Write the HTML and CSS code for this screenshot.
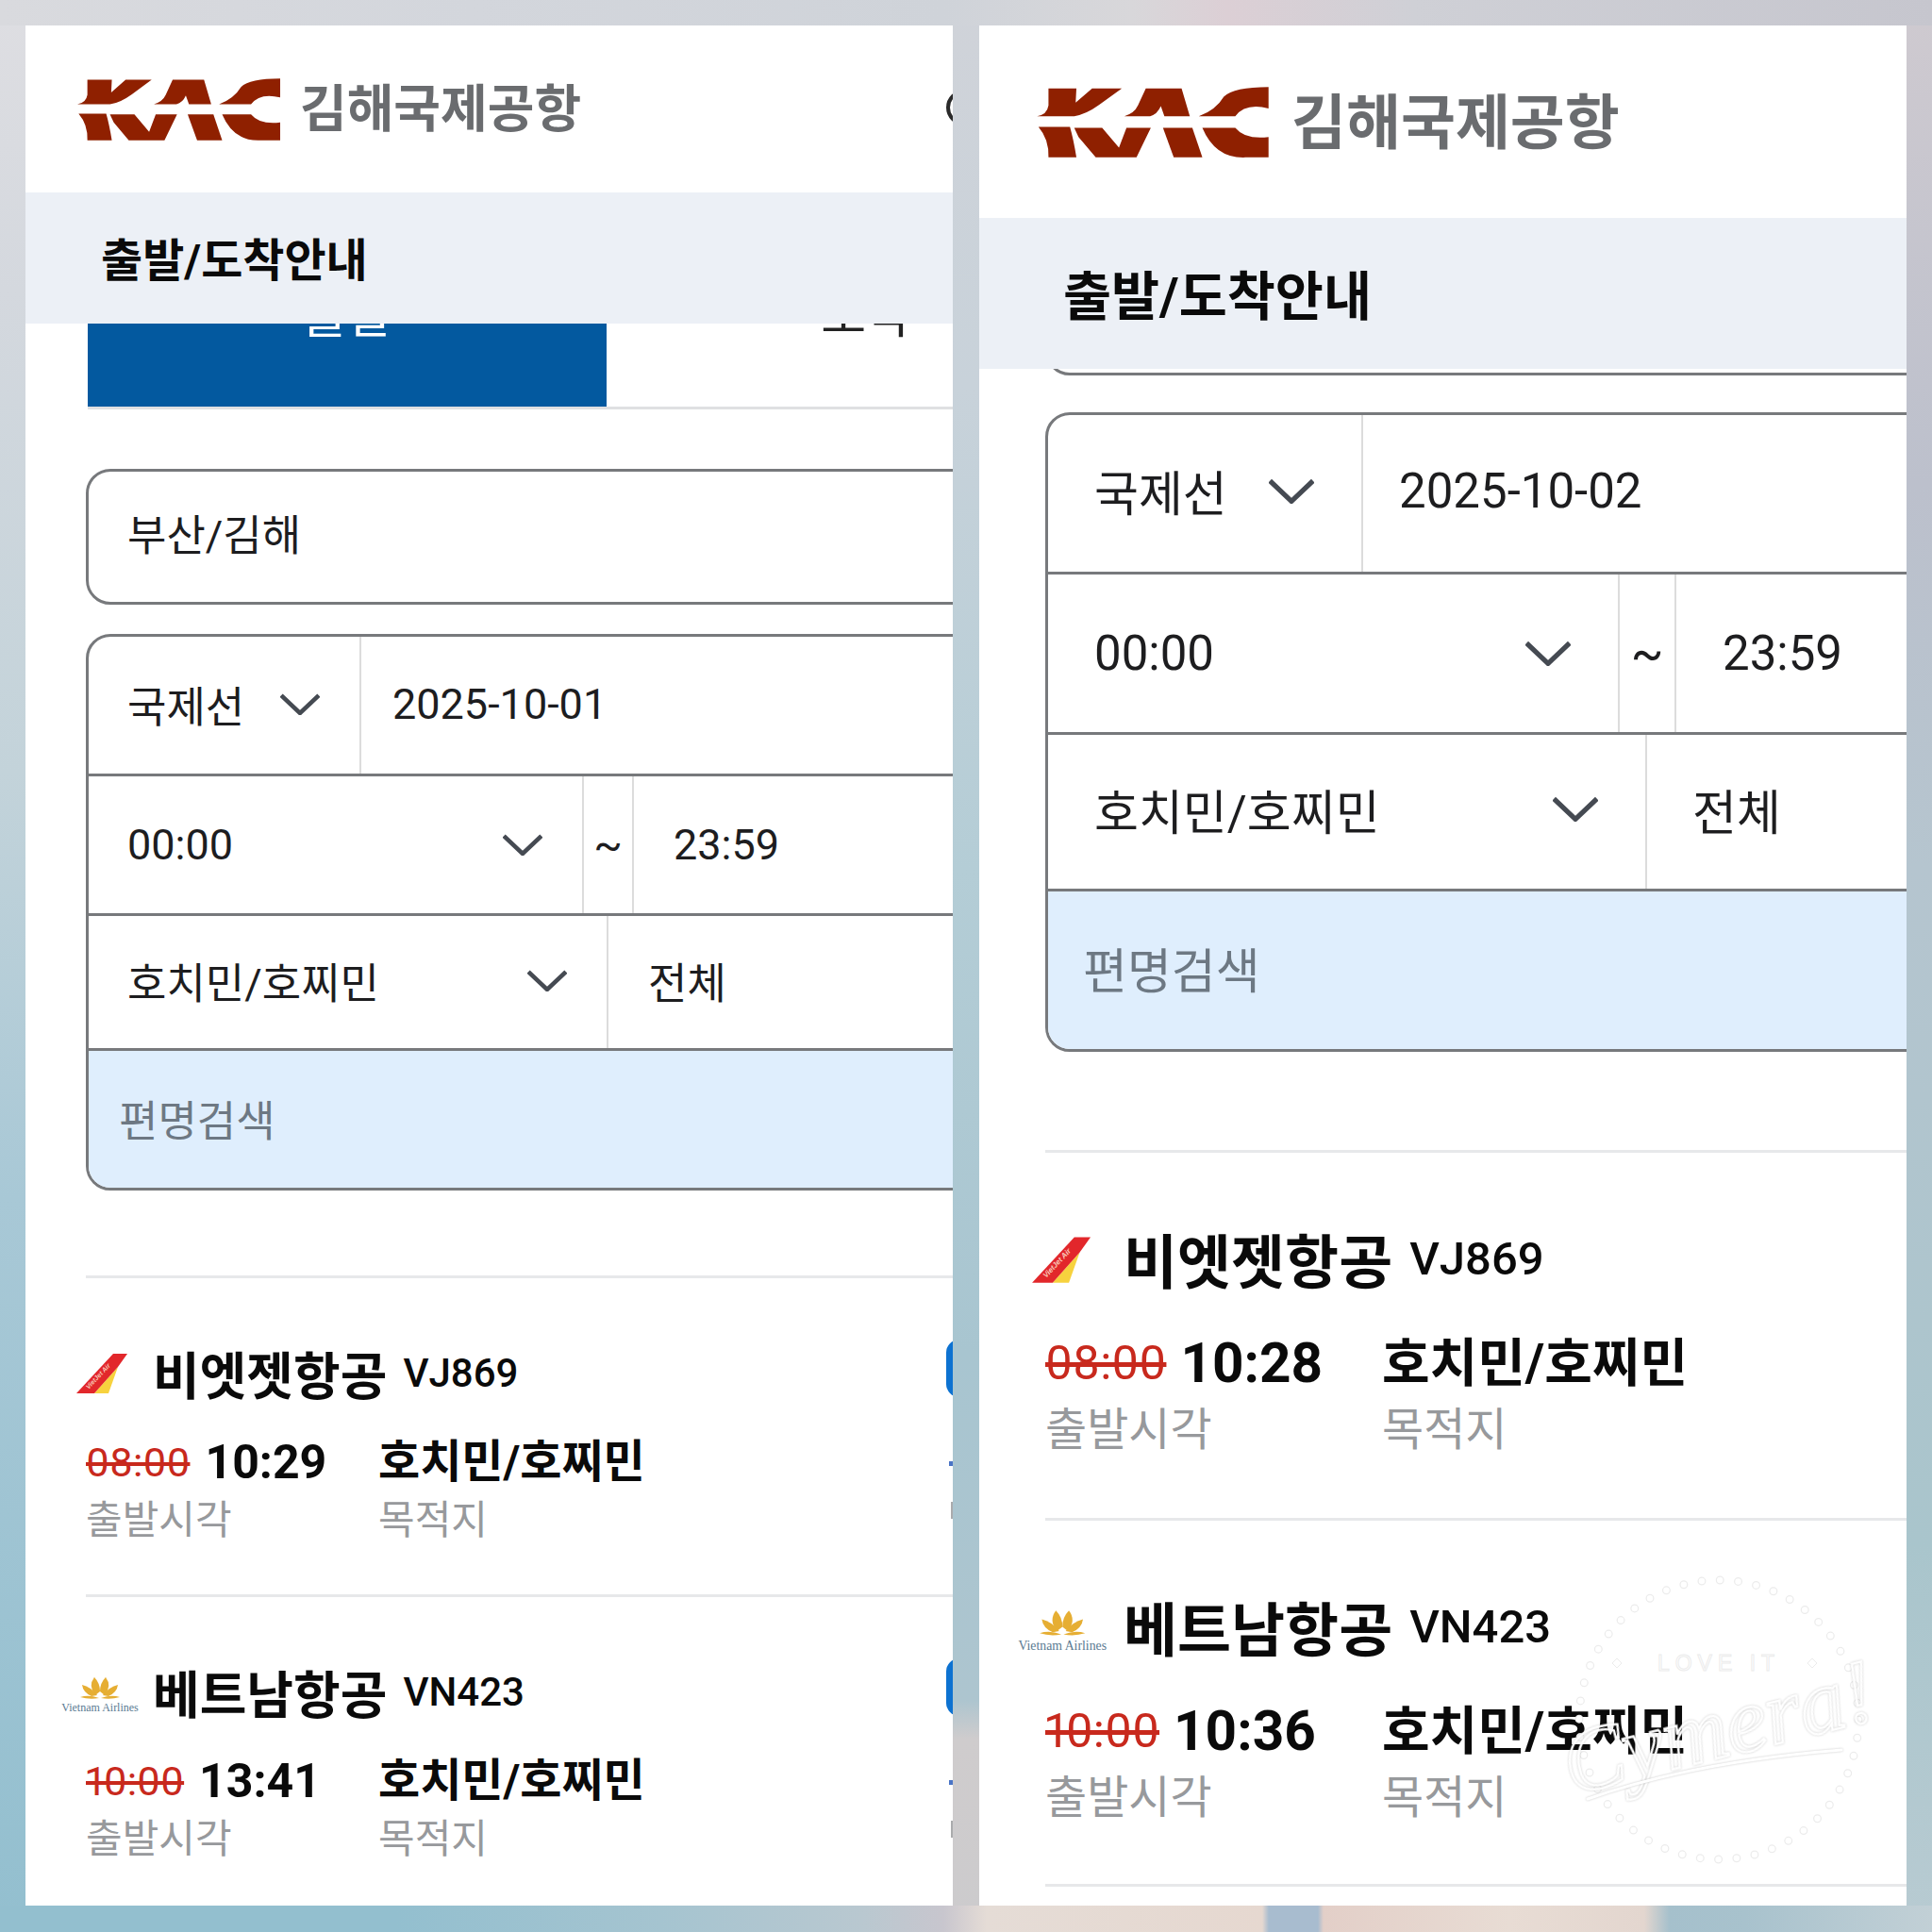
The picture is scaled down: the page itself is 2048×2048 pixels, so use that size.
FILE: index.html
```html
<!DOCTYPE html>
<html lang="ko">
<head>
<meta charset="utf-8">
<title>김해국제공항 출발/도착안내</title>
<link rel="stylesheet" href="styles.css">
</head>
<body>
<svg class="defs" width="0" height="0">
  <defs>
    <g id="kac">
      <path d="M100 72H178L176 112L222 72H305L242 118Q205 145 172 150H68Q96 146 100 120Z"/>
      <path d="M72 180H160Q170 215 178 265H100Q102 215 72 180Z"/>
      <path d="M172 182H250L297 238L318 182H386L346 265H232L184 208Z"/>
      <path d="M312 150Q340 142 350 120L372 72H472L495 150H424L414 122Q404 145 384 150Z"/>
      <path d="M420 182H502L530 265H450Z"/>
      <path d="M520 150Q568 132 590 95Q618 68 715 68V128Q650 112 622 150Z"/>
      <path d="M530 182H622Q650 216 715 208V265H650Q566 268 530 182Z"/>
    </g>
    <g id="tail">
      <polygon points="19,42 44,14 34,42" fill="#f7d23e"/>
      <polygon points="0,42 39,0 54,0 44,14 19,42" fill="#e2272b"/>
      <text class="tail-text" x="0" y="0" transform="translate(13 38) rotate(-47)">VietJet Air</text>
    </g>
    <g id="lotus" fill="#e6ae33">
      <path d="M37 34Q29 24 36 15Q42 21 42 30Z"/>
      <path d="M47 34Q55 24 48 15Q42 21 42 30Z"/>
      <path d="M33 35Q24 31 23 23Q32 25 39 34Z"/>
      <path d="M51 35Q60 31 61 23Q52 25 45 34Z"/>
      <path d="M21 36Q30 33 41 37Q31 39 21 36Z"/>
      <path d="M63 36Q54 33 43 37Q53 39 63 36Z"/>
      <text class="vn-text" x="42" y="51" text-anchor="middle">Vietnam Airlines</text>
    </g>
    <polyline id="chev" points="1,2 20,20 39,2" fill="none" stroke="#454a52" stroke-width="4.4"/>
  </defs>
</svg>
<main class="collage">

  <section class="panel panel-a">
    <header class="head">
      <svg class="kac" viewBox="68 65 647 203" fill="#8f2000"><use href="#kac"/></svg>
      <span class="airport">김해국제공항</span>
      <span class="search-ring"></span>
    </header>
    <h1 class="sub">출발/도착안내</h1>
    <div class="content">
      <div class="tabs">
        <div class="tab tab-on">출발</div>
        <div class="tab">도착</div>
      </div>
      <div class="airport-input">부산/김해</div>
      <div class="form">
        <div class="row row-1">
          <div class="cell first">국제선<svg class="chev" viewBox="0 0 40 22"><use href="#chev"/></svg></div>
          <div class="cell second">2025-10-01</div>
        </div>
        <div class="row row-2">
          <div class="cell first">00:00<svg class="chev" viewBox="0 0 40 22"><use href="#chev"/></svg></div>
          <div class="cell tilde">~</div>
          <div class="cell third">23:59</div>
        </div>
        <div class="row row-3">
          <div class="cell first">호치민/호찌민<svg class="chev" viewBox="0 0 40 22"><use href="#chev"/></svg></div>
          <div class="cell second">전체</div>
        </div>
        <div class="row row-4">편명검색</div>
      </div>
      <div class="flights">
        <article class="flight">
          <div class="flight-main">
            <div class="flight-head"><svg class="logo" viewBox="0 0 88 60"><use href="#tail" x="17" y="10"/></svg><span class="name">비엣젯항공</span><span class="code">VJ869</span></div>
            <div class="flight-info">
              <div class="col-time"><div class="times"><s>08:00</s><b>10:29</b></div><div class="label">출발시각</div></div>
              <div><div class="dest">호치민/호찌민</div><div class="label">목적지</div></div>
            </div>
          </div>
          <div class="actions"><span class="pill"></span><span class="dot"></span><span class="bar"></span></div>
        </article>
        <article class="flight">
          <div class="flight-main">
            <div class="flight-head"><svg class="logo" viewBox="0 0 88 60"><use href="#lotus"/></svg><span class="name">베트남항공</span><span class="code">VN423</span></div>
            <div class="flight-info">
              <div class="col-time"><div class="times"><s>10:00</s><b>13:41</b></div><div class="label">출발시각</div></div>
              <div><div class="dest">호치민/호찌민</div><div class="label">목적지</div></div>
            </div>
          </div>
          <div class="actions"><span class="pill"></span><span class="dot"></span><span class="bar"></span></div>
        </article>
      </div>
    </div>
  </section>

  <section class="panel panel-b">
    <header class="head">
      <svg class="kac" viewBox="68 65 647 203" fill="#8f2000"><use href="#kac"/></svg>
      <span class="airport">김해국제공항</span>
    </header>
    <h1 class="sub">출발/도착안내</h1>
    <div class="content">
      <div class="airport-input"></div>
      <div class="form">
        <div class="row row-1">
          <div class="cell first">국제선<svg class="chev" viewBox="0 0 40 22"><use href="#chev"/></svg></div>
          <div class="cell second">2025-10-02</div>
        </div>
        <div class="row row-2">
          <div class="cell first">00:00<svg class="chev" viewBox="0 0 40 22"><use href="#chev"/></svg></div>
          <div class="cell tilde">~</div>
          <div class="cell third">23:59</div>
        </div>
        <div class="row row-3">
          <div class="cell first">호치민/호찌민<svg class="chev" viewBox="0 0 40 22"><use href="#chev"/></svg></div>
          <div class="cell second">전체</div>
        </div>
        <div class="row row-4">편명검색</div>
      </div>
      <div class="flights">
        <article class="flight">
          <div class="flight-main">
            <div class="flight-head"><svg class="logo" viewBox="0 0 88 60"><use href="#tail" x="14" y="10"/></svg><span class="name">비엣젯항공</span><span class="code">VJ869</span></div>
            <div class="flight-info">
              <div class="col-time"><div class="times"><s>08:00</s><b>10:28</b></div><div class="label">출발시각</div></div>
              <div><div class="dest">호치민/호찌민</div><div class="label">목적지</div></div>
            </div>
          </div>
        </article>
        <article class="flight">
          <div class="flight-main">
            <div class="flight-head"><svg class="logo" viewBox="0 0 88 60"><use href="#lotus"/></svg><span class="name">베트남항공</span><span class="code">VN423</span></div>
            <div class="flight-info">
              <div class="col-time"><div class="times"><s>10:00</s><b>10:36</b></div><div class="label">출발시각</div></div>
              <div><div class="dest">호치민/호찌민</div><div class="label">목적지</div></div>
            </div>
          </div>
        </article>
      </div>
      <div class="last-rule"></div>
    </div>
    <svg class="stamp" viewBox="0 0 320 320">
      <circle class="stamp-dots-shade" cx="160" cy="160" r="148" stroke-dasharray="0 19.4"/>
      <circle class="stamp-dots" cx="160" cy="160" r="148" stroke-dasharray="0 19.4"/>
      <polygon class="stamp-diamond" points="47,100 52,95 57,100 52,105"/>
      <polygon class="stamp-diamond" points="254,100 259,95 264,100 259,105"/>
      <text class="stamp-small" x="160" y="108" text-anchor="middle">LOVE IT</text>
      <text class="stamp-script" x="160" y="200" text-anchor="middle" transform="rotate(-14 160 170)">Cymera!</text>
      <path class="stamp-swoosh" d="M21 244Q130 205 290 192"/>
    </svg>
  </section>

</main>
</body>
</html>
```
FILE: styles.css
```css
* { box-sizing: border-box; }

html, body {
  margin: 0;
  padding: 0;
}

body {
  width: 2048px;
  height: 2048px;
  overflow: hidden;
  font-family: Roboto, "Noto Sans CJK KR", sans-serif;
  color: #1d1d1f;
  background-color: #b8cdd6;
  background-repeat: no-repeat;
  background-image:
    linear-gradient(90deg, #93bfcf 0, #93bfcf 420px, #a5c4d0 700px, #b9c8d0 914px, #c8c6ce 1000px, #e5dcd6 1046px, #e6d8d0 1338px, #a8bccf 1345px, #a8bccf 1397px, #e3cfc8 1403px, #e8dcd4 1600px, #e3d6cf 1743px, #a5c0cc 1770px, #a8c2cd 1850px, #c2d0d6 2048px),
    linear-gradient(90deg, #d9dade 0, #d3d6dc 500px, #cfd3d9 1000px, #d8d7da 1200px, #dccfd5 1300px, #cfd0d6 1500px, #c6c6ce 2048px),
    linear-gradient(180deg, #dedee2 0, #d4d8de 15%, #c3d3da 40%, #a8c8d6 62%, #93bfcf 100%),
    linear-gradient(180deg, #d0d3d9 0, #c8d2da 20%, #b4cdd6 45%, #a8c5d0 70%, #adc5cf 88%, #cfcccd 90%, #cccbcd 100%),
    linear-gradient(180deg, #cfcad0 0, #bcc0cc 25%, #b5c5cf 45%, #a9c5cc 80%, #b8cbd2 100%);
  background-size: 2048px 28px, 2048px 27px, 27px 2048px, 28px 2048px, 27px 2048px;
  background-position: 0 2020px, 0 0, 0 0, 1010px 0, 2021px 0;
}

.defs { position: absolute; }

.collage {
  display: flex;
  gap: 28px;
  padding: 27px 27px 28px;
  height: 2048px;
}

.panel {
  position: relative;
  flex: 0 0 983px;
  height: 1993px;
  overflow: hidden;
  background: #fff;
}

.panel-a {
  --head-h: 177px; --head-pad: 55px; --logo-w: 215px; --logo-h: 68px; --logo-gap: 21px; --airport-fs: 54px; --airport-lift: 8px;
  --sub-h: 139px; --sub-lh: 146px; --sub-pad: 80px; --sub-fs: 48px;
  --left: 64px; --fs: 45px;
  --input-h: 144px; --input-mt: 63px; --input-pad: 41px; --input-lh: 137px;
  --form-mt: 31px; --r1: 145px; --r2: 148px; --r3: 143px; --r4: 148px; --row-lift: 3px;
  --pad: 41px; --pad-r: 42px;
  --w1a: 289px; --w2a: 525px; --w2b: 53px; --w3a: 551px;
  --p1b: 33px; --p2c: 42px; --p3b: 42px; --p4: 32px; --chev-w: 42px; --chev-h: 23px;
  --flights-mt: 90px; --flight-h: 338px; --flight2-h: 338px;
  --fh-pt: 70px; --fh-h: 60px; --logo-slot: 88px; --logo-ml: -27px; --logo-mr: 10px;
  --name-fs: 54px; --code-fs: 42px; --code-ml: 17px; --tabs-ml: 2px;
  --fi-mt: 35px; --ti-h: 60px; --s-fs: 43px; --b-fs: 50px; --s-mr: 16px;
  --dest-x: 310px; --dest-fs: 48px; --lb-mt: 7px; --lb-h: 50px; --lb-fs: 42px;
}

.panel-b {
  --head-h: 204px; --head-pad: 61px; --logo-w: 246px; --logo-h: 77px; --logo-gap: 24px; --airport-fs: 63px; --airport-lift: 10px;
  --sub-h: 160px; --sub-lh: 170px; --sub-pad: 89px; --sub-fs: 55.5px;
  --left: 70px; --fs: 51px;
  --input-h: 106px; --input-mt: -99px; --input-pad: 49px; --input-lh: 106px;
  --form-mt: 39px; --r1: 166px; --r2: 170px; --r3: 166px; --r4: 170px; --row-lift: 6px;
  --pad: 49px; --pad-r: 50px;
  --w1a: 334px; --w2a: 606px; --w2b: 60px; --w3a: 635px;
  --p1b: 38px; --p2c: 49px; --p3b: 48px; --p4: 37px; --chev-w: 48px; --chev-h: 27px;
  --flights-mt: 104px; --flight-h: 390px; --flight2-h: 388px;
  --fh-pt: 77px; --fh-h: 70px; --logo-slot: 101px; --logo-ml: -30px; --logo-mr: 12px;
  --name-fs: 62px; --code-fs: 49px; --code-ml: 18px; --tabs-ml: 0;
  --fi-mt: 41px; --ti-h: 70px; --s-fs: 50px; --b-fs: 58.5px; --s-mr: 15px;
  --dest-x: 357px; --dest-fs: 55px; --lb-mt: 8px; --lb-h: 56px; --lb-fs: 48px;
}

/* header */
.head {
  display: flex;
  align-items: center;
  height: var(--head-h);
  padding-left: var(--head-pad);
  width: 1100px;
  background: #fff;
  position: relative;
  z-index: 2;
}

.kac {
  width: var(--logo-w);
  height: var(--logo-h);
  flex: none;
}

.airport {
  margin-left: var(--logo-gap);
  margin-bottom: var(--airport-lift);
  font-size: var(--airport-fs);
  font-weight: 700;
  color: #6a6c6f;
  white-space: nowrap;
}

.search-ring {
  position: absolute;
  left: 976px;
  top: 68px;
  width: 38px;
  height: 38px;
  border: 4px solid #2a2a2a;
  border-radius: 50%;
}

.sub {
  position: relative;
  z-index: 2;
  margin: 0;
  height: var(--sub-h);
  line-height: var(--sub-lh);
  padding-left: var(--sub-pad);
  background: #ecf0f6;
  font-size: var(--sub-fs);
  font-weight: 700;
  color: #0a0a0a;
  white-space: nowrap;
}

.content {
  width: 1300px;
  padding-left: var(--left);
}

/* tabs */
.tabs {
  display: flex;
  margin-top: -43px;
  margin-left: var(--tabs-ml);
  height: 134px;
  border-bottom: 3px solid #dfe0e2;
}

.tab {
  width: 550px;
  padding-top: 6px;
  line-height: 60px;
  text-align: center;
  font-size: 52px;
  color: #222;
}

.tab-on {
  background: #03599f;
  color: #fff;
}

/* search form */
.airport-input {
  position: relative;
  margin-top: var(--input-mt);
  height: var(--input-h);
  padding-left: var(--input-pad);
  line-height: var(--input-lh);
  font-size: var(--fs);
  border: 3px solid #77797c;
  border-radius: 26px;
}

.form {
  margin-top: var(--form-mt);
  border: 3px solid #77797c;
  border-radius: 26px;
  overflow: hidden;
  font-size: var(--fs);
}

.row {
  display: flex;
  border-top: 3px solid #77797c;
}

.row-1 { height: var(--r1); border-top: 0; }
.row-2 { height: var(--r2); }
.row-3 { height: var(--r3); }

.row-4 {
  height: var(--r4);
  align-items: center;
  padding-left: var(--p4);
  padding-bottom: var(--row-lift);
  background: #dfeefd;
  color: #6d7883;
}

.cell {
  display: flex;
  align-items: center;
  white-space: nowrap;
}

.row-1 .cell,
.row-3 .cell {
  padding-bottom: var(--row-lift);
}

.first {
  padding-left: var(--pad);
  padding-right: var(--pad-r);
  border-right: 2px solid #dcdcdc;
}

.row-1 .first { flex: 0 0 var(--w1a); }
.row-2 .first { flex: 0 0 var(--w2a); }
.row-3 .first { flex: 0 0 var(--w3a); }

.row-1 .second { padding-left: var(--p1b); }
.row-3 .second { padding-left: var(--p3b); }

.tilde {
  flex: 0 0 var(--w2b);
  justify-content: center;
  border-right: 2px solid #dcdcdc;
}

.third { padding-left: var(--p2c); }

.chev {
  margin-left: auto;
  width: var(--chev-w);
  height: var(--chev-h);
  flex: none;
}

/* flights */
.flights { margin-top: var(--flights-mt); }

.flight {
  display: flex;
  height: var(--flight-h);
  border-top: 3px solid #e7e8ea;
}

.flight + .flight { height: var(--flight2-h); }

.flight-main { flex: 0 0 912px; }

.flight-head {
  display: flex;
  align-items: center;
  margin-top: var(--fh-pt);
  height: var(--fh-h);
  white-space: nowrap;
}

.logo {
  flex: none;
  width: var(--logo-slot);
  margin-left: var(--logo-ml);
  margin-right: var(--logo-mr);
  overflow: visible;
}

.tail-text {
  font: italic 700 7px "Liberation Sans", sans-serif;
  fill: #f9c9b8;
}

.vn-text {
  font: 12px "Liberation Serif", serif;
  fill: #5a7a92;
}

.name {
  font-size: var(--name-fs);
  font-weight: 700;
  color: #0a0a0a;
}

.code {
  margin-left: var(--code-ml);
  font-size: var(--code-fs);
  font-weight: 500;
  color: #0a0a0a;
}

.flight-info {
  display: flex;
  margin-top: var(--fi-mt);
}

.col-time { flex: 0 0 var(--dest-x); }

.times {
  display: flex;
  align-items: center;
  height: var(--ti-h);
}

.times s {
  margin-right: var(--s-mr);
  font-size: var(--s-fs);
  font-variant-numeric: proportional-nums;
  color: #c8291d;
}

.times b {
  font-size: var(--b-fs);
  font-weight: 700;
  color: #0a0a0a;
}

.dest {
  height: var(--ti-h);
  line-height: var(--ti-h);
  font-size: var(--dest-fs);
  font-weight: 700;
  color: #0a0a0a;
  white-space: nowrap;
}

.label {
  margin-top: var(--lb-mt);
  height: var(--lb-h);
  line-height: var(--lb-h);
  font-size: var(--lb-fs);
  color: #97999c;
}

.actions {
  position: relative;
  flex: 0 0 120px;
}

.pill {
  display: block;
  margin-top: 65px;
  width: 120px;
  height: 61px;
  border-radius: 14px;
  background: #0d72d1;
}

.dot {
  display: block;
  margin: 68px 0 0 3px;
  width: 5px;
  height: 5px;
  background: #4a74c6;
}

.bar {
  display: block;
  margin: 38px 0 0 5px;
  width: 4px;
  height: 18px;
  background: #aaabad;
}

.last-rule {
  height: 3px;
  background: #e7e8ea;
}

/* watermark stamp */
.stamp {
  position: absolute;
  left: 624px;
  top: 1636px;
  width: 320px;
  height: 320px;
  overflow: visible;
}

.stamp-dots,
.stamp-dots-shade {
  fill: none;
  stroke-linecap: round;
}

.stamp-dots-shade {
  stroke: #ececec;
  stroke-width: 9px;
}

.stamp-dots {
  stroke: #fff;
  stroke-width: 6.5px;
}

.stamp-diamond {
  fill: #fff;
  stroke: #ececec;
  stroke-width: 1px;
}

.stamp-small {
  font: 23px "Liberation Sans", sans-serif;
  letter-spacing: 6px;
  fill: #fff;
  stroke: #ececec;
  stroke-width: 1px;
}

.stamp-script {
  font: italic 96px "Liberation Serif", serif;
  fill: none;
  stroke: #fff;
  stroke-width: 2.4px;
  filter: drop-shadow(0 0 1px rgba(0, 0, 0, 0.22));
}

.stamp-swoosh {
  fill: none;
  stroke: #fff;
  stroke-width: 3px;
  stroke-linecap: round;
  filter: drop-shadow(0 0 1px rgba(0, 0, 0, 0.22));
}
```
